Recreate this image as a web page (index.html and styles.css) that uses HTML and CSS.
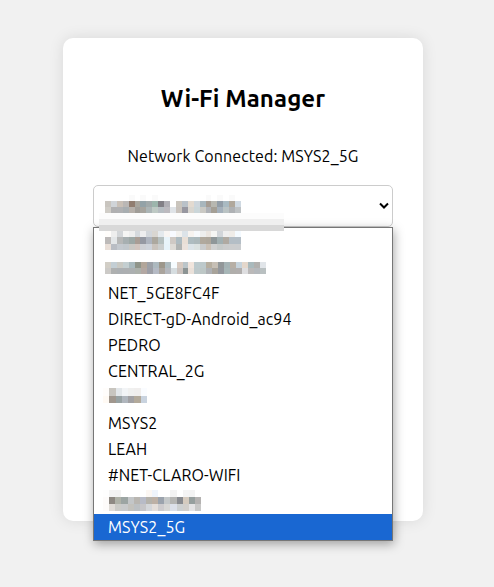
FILE: index.html
```
<!DOCTYPE html>
<html lang="en">
<head>
<meta charset="utf-8">
<title>Wi-Fi Manager</title>
<link rel="stylesheet" href="styles.css">
</head>
<body>
<main class="card">
  <h1 class="title">Wi-Fi Manager</h1>
  <p class="status">Network Connected: MSYS2_5G</p>
  <div class="picker">
    <div class="select">
      <svg class="mosaic mosaic-select" data-mosaic="select"></svg>
      <svg class="chevron" width="10" height="8" viewBox="0 0 10 8"><path d="M1 1.5 5 5.5 9 1.5" fill="none" stroke="#000" stroke-width="2"/></svg>
    </div>
    <ul class="menu">
      <li class="option"><svg class="mosaic mosaic-a" data-mosaic="a"></svg></li>
      <li class="option"><svg class="mosaic mosaic-b" data-mosaic="b"></svg></li>
      <li class="option"><span class="name">NET_5GE8FC4F</span></li>
      <li class="option"><span class="name">DIRECT-gD-Android_ac94</span></li>
      <li class="option"><span class="name">PEDRO</span></li>
      <li class="option"><span class="name">CENTRAL_2G</span></li>
      <li class="option"><svg class="mosaic mosaic-c" data-mosaic="c"></svg></li>
      <li class="option"><span class="name">MSYS2</span></li>
      <li class="option"><span class="name">LEAH</span></li>
      <li class="option"><span class="name">#NET-CLARO-WIFI</span></li>
      <li class="option"><svg class="mosaic mosaic-d" data-mosaic="d"></svg></li>
      <li class="option selected"><span class="name">MSYS2_5G</span></li>
    </ul>
    <div class="band"></div>
  </div>
</main>
<script src="mosaic.js"></script>
</body>
</html>
```
FILE: styles.css
```
* { box-sizing: border-box; }
body {
  margin: 0;
  height: 587px;
  padding-top: 38px;
  background: #f1f1f1;
  color: #000;
  font: 16px/26px Ubuntu, "Noto Sans", sans-serif;
  overflow: hidden;
}
.card {
  width: 360px;
  height: 483px;
  margin-left: 63px;
  padding: 30px;
  background: #fff;
  border-radius: 10px;
  box-shadow: 0 0 15px rgba(0, 0, 0, .1);
}
.title {
  margin: 17px 0 0;
  font-size: 24px;
  line-height: 28px;
  font-weight: 700;
  text-align: center;
  white-space: nowrap;
  letter-spacing: .1px;
}
.status {
  margin: 30px 0 0;
  text-align: center;
  white-space: nowrap;
  letter-spacing: .1px;
}
.picker { position: relative; margin-top: 16px; }
.select {
  display: flex;
  align-items: center;
  justify-content: space-between;
  height: 42px;
  padding: 0 3px 0 11px;
  border: 1px solid #ccc;
  border-radius: 5px;
  background: #fff;
}
.menu {
  position: absolute;
  top: 42px;
  left: 0;
  width: 300px;
  margin: 0;
  padding: 0;
  list-style: none;
  background: #fff;
  border: 1px solid #767676;
  box-shadow: 1px 3px 10px rgba(0, 0, 0, .35);
}
.option { display: flex; height: 26px; padding-left: 14px; }
.selected { background: #1967d2; color: #fff; }
.name { white-space: nowrap; letter-spacing: .1px; }
.mosaic { display: block; flex: none; }
.mosaic-select { margin-top: -5px; }
.mosaic-a { margin: 3px 0 0 -3px; }
.mosaic-b { margin: 8px 0 0 -3px; }
.mosaic-c { margin: 4px 0 0 -5px; }
.mosaic-d { margin: 2px 0 0 -5px; }
.band {
  position: absolute;
  top: 28px;
  left: 6px;
  width: 185px;
  height: 18px;
  background: linear-gradient(#fcfcfc 0 6px, #efefef 6px 12px, #d8d8d8 12px);
}
```
FILE: mosaic.js
```
// Each mosaic lists row heights and rows of six-pixel-wide cells.
const mosaics = {
  select: { heights: [6, 6, 6], rows: [
    'fff fff fff fff fafafa fff fafafa fff fafafa fff fff fff fff fff fff fff fff fafafa fff fafafa fff fafafa fff',
    'c9c5bf d0d4d8 c9c0b7 bab7b5 917d70 a8a59d 93a2a7 a0a9aa 9cb5ac 828086 b0afb5 fff cac5bd b9c1c8 e3dad0 ced6dc a8b6bd a69d94 b7b7b0 929da7 a9bac2 b0a89c cfd9e2',
    'd0cdc7 b0b0b1 b0b1b3 a8aeb1 b6b0aa a09d98 a6a49e abb5b6 bec9c4 b6bdc2 bcbabf dfe3e7 c8c2bc 9797a0 d9d6d0 cbd6d9 cac9c4 aeb1b6 a49f95 a4b0bb bac3c4 aeb1b4 bec2c4' ] },
  a: { heights: [6, 7, 6], rows: [
    'fffdfb eeeeee d3d6d9 f5f5f4 eeeeee d5d9dd eeeeef d3d7dc d9d6d1 e4e9ed f8f5f3 f8faff f3f1ee dce3e8 f7f3ef f7f9fb eeeeed ebe5df f5f5f3 d1d5d9 eeeeee efece8 f4faff',
    'bdbab9 e3e6e8 b7b8b8 a7afb1 9da8a6 a99d95 9599a3 aeb4bf aca89f b6c0c0 e9f4fa cfc9c4 aebbc1 e9dfd6 aebcc0 adb9bb b1a99d aea79c 8f9799 a2b0b2 b0aaa2 b4bec6 b4bec6',
    'e9dfd8 b9bdc4 c4c9cf c1c7cc cac8c4 d2c5bf ced0d5 ced3db c9c3bd cbcece e7f3fa dedbd6 b1b4b3 ebe2dc dce4e8 dbe2e1 cacccd cbc1b6 d0d1d1 c6cac9 cbcccc cccdce cbcdcf' ] },
  b: { heights: [6, 6], rows: [
    'd2cec6 c3ced4 c9c9c3 c3ced0 a9b9bd 90958a b2a69a 9ca0a7 adb9bf 9d978b acb9bd f6fcff d7cac1 bbc5c9 f1e5dd bdcacd bdc9cb b6ae9f c6bfb5 929799 a5b3b5 b7afa5 c6d3dc e4d7cb a9b9bc b1b0ae e1e5e9',
    'cccac7 aeb0b0 abafb2 acafb1 acb0b1 acb1ab b3a8a3 9c9ea6 b5bac4 aaa49d b5b8be d6dde0 cbc3bf 8c9494 eae1da bec9cb bdc7c6 aeb1b5 a8a39a 93979d a7b6b7 b0aeab b1aead dedee0 bbb9b9 b5b9bd b9c0c1' ] },
  c: { heights: [8, 7], rows: [
    'fffdfb c8c5bf e3e7ea f2f4f6 f0f0ef f0eeed fafcff',
    'fffaf4 a0978e 98a2a3 b0b6bd a2a1a4 b3aa9b c9d3df' ] },
  d: { heights: [7, 7, 7], rows: [
    'fefefe f4f4f4 f3f3f3 fff fff fff fff fcf7f3 eff4fb fff fff f3f3f3 fff f4f4f4 f3f3f3 fff',
    'fdfbfa 8e8983 afb2a8 9ca5a3 c3c6c8 b9b6b1 b8bbc7 b5b2ab bdb0a5 9ba3ad c4c8c9 b5b5b3 898b90 d5cbbf 969f9e b4b2b1',
    'fdfbfa e0dcd7 cbcbc7 c8cacb c3c2bd bcc0c3 c6c5c8 d4d6da e4deda cdcbcd d7d7d5 dce0e9 cdd0d1 d2cfcb e4e3e4 c8c8c7' ] }
};

// Cell widths average slightly over six pixels in the short mosaics.
const widths = { select: 136, a: 136, b: 161, c: 44, d: 98 };

document.querySelectorAll('[data-mosaic]').forEach(svg => {
  const name = svg.dataset.mosaic;
  const { heights, rows } = mosaics[name];
  const grid = rows.map(row => row.split(' '));
  const columns = grid[0].length;
  const edge = c => Math.round(c * widths[name] / columns);
  svg.setAttribute('width', widths[name]);
  svg.setAttribute('height', heights.reduce((a, b) => a + b));
  let y = 0;
  grid.forEach((row, r) => {
    row.forEach((color, c) => {
      const cell = document.createElementNS('http://www.w3.org/2000/svg', 'rect');
      cell.setAttribute('x', edge(c));
      cell.setAttribute('y', y);
      cell.setAttribute('width', edge(c + 1) - edge(c));
      cell.setAttribute('height', heights[r]);
      cell.setAttribute('fill', '#' + color);
      svg.append(cell);
    });
    y += heights[r];
  });
});
```
